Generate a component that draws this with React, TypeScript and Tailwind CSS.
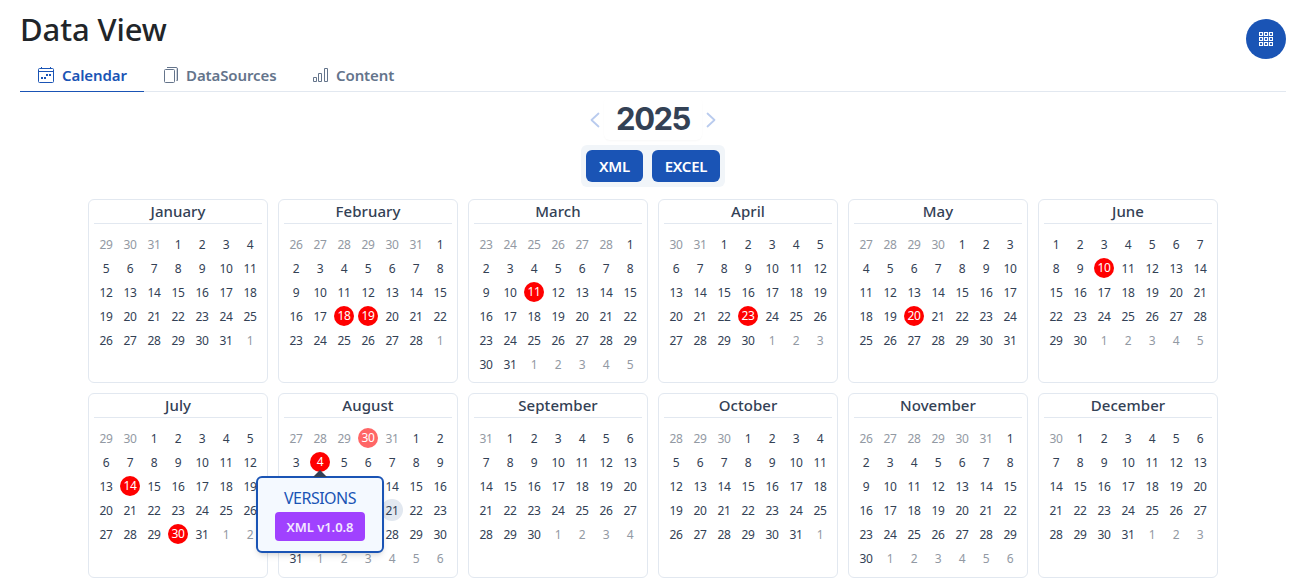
import React from "react";

type Month = { name: string; before: number[]; days: number; marks: number[]; after: number };

const months: Month[] = [
  { name: "January", before: [29, 30, 31], days: 31, marks: [], after: 1 },
  { name: "February", before: [26, 27, 28, 29, 30, 31], days: 28, marks: [18, 19], after: 1 },
  { name: "March", before: [23, 24, 25, 26, 27, 28], days: 31, marks: [11], after: 5 },
  { name: "April", before: [30, 31], days: 30, marks: [23], after: 3 },
  { name: "May", before: [27, 28, 29, 30], days: 31, marks: [20], after: 0 },
  { name: "June", before: [], days: 30, marks: [10], after: 5 },
  { name: "July", before: [29, 30], days: 31, marks: [14, 30], after: 2 },
  { name: "August", before: [27, 28, 29, 30, 31], days: 31, marks: [4], after: 6 },
  { name: "September", before: [31], days: 30, marks: [], after: 4 },
  { name: "October", before: [28, 29, 30], days: 31, marks: [], after: 1 },
  { name: "November", before: [26, 27, 28, 29, 30, 31], days: 30, marks: [], after: 6 },
  { name: "December", before: [30], days: 31, marks: [], after: 3 },
];

// Days that lie beneath the open versions popup.
const covered = [10, 11, 12, 13, 17, 18, 19, 20, 24, 25, 26, 27];

function CalendarIcon() {
  return (
    <svg width="16" height="16" viewBox="0 0 16 16" fill="none" stroke="currentColor">
      <rect x="0.5" y="1.5" width="15" height="14" rx="1" />
      <path d="M0 4.5h16M3.5 0v2M12.5 0v2" />
      <path d="M8 7h2v2H8zM11 7h2v2h-2zM3 10h2v2H3zM6 10h2v2H6z" fill="currentColor" stroke="none" />
    </svg>
  );
}

function FilesIcon() {
  return (
    <svg width="14" height="16" viewBox="0 0 14 16" fill="none" stroke="currentColor">
      <rect x="0.5" y="2.5" width="10" height="13" rx="1" />
      <path d="M3 .5H12A1.500 1.500 0 0 1 13.500 2V13.500H12.500" />
      <path d="M12.500 2v11.500" strokeOpacity="0.3" />
    </svg>
  );
}

function BarsIcon() {
  return (
    <svg width="15" height="16" viewBox="0 0 15 16" fill="none" stroke="currentColor">
      <path d="M.5 10.500h3v4h-3zM5.500 6.500h3v8h-3zM11.500 1.500h3v13h-3z" />
    </svg>
  );
}

function GridIcon() {
  return (
    <svg width="14" height="14" viewBox="0 0 14 14" fill="none" stroke="currentColor" strokeWidth="1.2">
      <path d="M.5 .5h3v3h-3zM5.500 .5h3v3h-3zM10.500 .5h3v3h-3zM.5 5.500h3v3h-3zM5.500 5.500h3v3h-3zM10.500 5.500h3v3h-3zM.5 10.500h3v3h-3zM5.500 10.500h3v3h-3zM10.500 10.500h3v3h-3z" />
    </svg>
  );
}

function Chevron({ left = false }: { left?: boolean }) {
  return (
    <svg width="10" height="16" viewBox="0 0 10 16" fill="none" stroke="#b9cbee" strokeWidth="1.8" strokeLinecap="round" strokeLinejoin="round">
      <path d={left ? "M8.500 1.500 1.500 8l7 6.500" : "M1.500 1.500 8.500 8l-7 6.500"} />
    </svg>
  );
}

function VersionsPopup() {
  return (
    <div className="absolute left-1/2 top-[26px] z-10 flex h-[77px] w-32 -translate-x-1/2 flex-col items-center rounded-md border-2 border-[#1a54b5] bg-[#f4f9ff] pt-[10px] shadow-md">
      <svg className="absolute -top-[8px] left-[55px]" width="14" height="7" viewBox="0 0 14 7">
        <path d="M7 0 14 7H0z" fill="#334155" />
      </svg>
      <div className="h-6 text-[16px] leading-[20px] tracking-[-0.5px] text-[#1a54b5]">VERSIONS</div>
      <div className="flex h-[29px] w-[90px] items-center justify-center rounded bg-[#a041ff] text-[13px] font-semibold tracking-[-0.05px] text-[#f3e8ff]">
        XML v1.0.8
      </div>
    </div>
  );
}

type DayProps = { value: number; muted?: boolean; marked?: boolean; today?: boolean; popup?: boolean; hidden?: boolean };

function Day({ value, muted, marked, today, popup, hidden }: DayProps) {
  const tone = muted ? "text-[#9299a3]" : "text-[#334155]";
  return (
    <div className={`relative flex size-6 items-center justify-center ${tone}`}>
      {marked ? (
        <span className={`flex size-5 items-center justify-center rounded-full pb-px text-white ${muted ? "bg-[#ff6666]" : "bg-[#ff0000]"}`}>{value}</span>
      ) : today ? (
        <span className="flex size-[22px] shrink-0 items-center justify-center rounded-full bg-[#e2e8f0] pt-px">{value}</span>
      ) : (
        !hidden && <span className="pt-px">{value}</span>
      )}
      {popup && <VersionsPopup />}
    </div>
  );
}

function MonthCard({ month }: { month: Month }) {
  const august = month.name === "August";
  return (
    <section className="rounded-md border border-[#e2e8f0] px-[5px]">
      <h2 className="h-6 border-b border-[#e2e8f0] text-center text-[15px] font-[540] leading-[23px] tracking-[0.05px] text-[#334155]">{month.name}</h2>
      <div className="mt-2 grid grid-cols-[repeat(7,24px)] text-[12px] leading-4 tracking-[-0.4px]">
        {month.before.map((d) => (
          <Day key={`b${d}`} value={d} muted marked={august && d === 30} />
        ))}
        {Array.from({ length: month.days }, (_, i) => i + 1).map((d) => (
          <Day
            key={d}
            value={d}
            marked={month.marks.includes(d)}
            today={august && d === 21}
            popup={august && d === 4}
            hidden={august && covered.includes(d)}
          />
        ))}
        {Array.from({ length: month.after }, (_, i) => i + 1).map((d) => (
          <Day key={`a${d}`} value={d} muted />
        ))}
      </div>
    </section>
  );
}

export default function App() {
  return (
    <main className="h-[588px] w-full overflow-hidden bg-white px-5 font-['Noto_Sans','Open_Sans',sans-serif]">
      <header className="flex h-[60px] justify-between">
        <h1 className="pt-[9px] text-[31px] font-medium leading-10 tracking-[-0.1px] text-[#212529]">Data View</h1>
        <button className="mt-[19px] flex size-10 items-center justify-center rounded-full bg-[#1a54b5] text-white">
          <GridIcon />
        </button>
      </header>
      <nav className="flex h-8 border-b border-[#e2e8f0] text-[15px] font-[560] tracking-[-0.1px] text-[#64748b]">
        <div className="flex h-8 w-[124px] items-center gap-2 border-b border-[#1a54b5] pb-px pl-[18px] text-[#1a54b5]">
          <CalendarIcon />
          Calendar
        </div>
        <div className="flex h-8 w-[149px] items-center gap-2 pb-0.5 pl-5">
          <FilesIcon />
          DataSources
        </div>
        <div className="flex h-8 items-center gap-2 pb-0.5 pl-5">
          <BarsIcon />
          Content
        </div>
      </nav>
      <div className="flex flex-col items-center">
        <div className="flex h-[53px] items-center gap-[3px]">
          <button className="pr-px pt-[3px]"><Chevron left /></button>
          <div className="flex h-[43px] w-[98px] items-center justify-center rounded-md pt-px font-['Inter',sans-serif] text-[31px] font-bold tracking-[-1.5px] text-[#334155] shadow-[0_1px_2px_rgba(0,0,0,0.03)]">
            2025
          </div>
          <button className="pl-px pt-[3px]"><Chevron /></button>
        </div>
        <div className="flex h-[42px] items-center gap-[9px] rounded-md bg-[#f1f5f9] px-[5px] text-[15px] font-semibold tracking-[-0.25px] text-white">
          <button className="h-8 w-[57px] rounded-md bg-[#1a54b5]">XML</button>
          <button className="h-8 w-[68px] rounded-md bg-[#1a54b5]">EXCEL</button>
        </div>
      </div>
      <div className="mx-auto mt-3 grid w-[1130px] grid-cols-6 grid-rows-[184px_185px] gap-[10px]">
        {months.map((m) => (
          <MonthCard key={m.name} month={m} />
        ))}
      </div>
    </main>
  );
}
